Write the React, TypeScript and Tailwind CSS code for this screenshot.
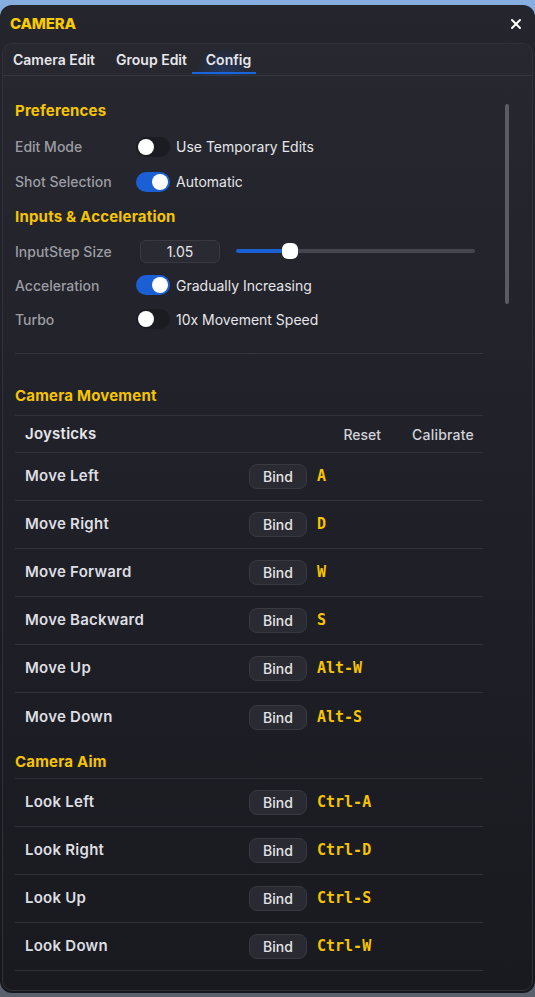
import { X } from "lucide-react";

const movement = [
  { name: "Move Left", key: "A" },
  { name: "Move Right", key: "D" },
  { name: "Move Forward", key: "W" },
  { name: "Move Backward", key: "S" },
  { name: "Move Up", key: "Alt-W" },
  { name: "Move Down", key: "Alt-S" },
];

const aim = [
  { name: "Look Left", key: "Ctrl-A" },
  { name: "Look Right", key: "Ctrl-D" },
  { name: "Look Up", key: "Ctrl-S" },
  { name: "Look Down", key: "Ctrl-W" },
];

function Toggle({ on }: { on: boolean }) {
  return (
    <div
      className={`w-[34px] h-[20px] rounded-full flex items-center px-[2px] ${
        on ? "bg-[#1b5fd4] justify-end" : "bg-[#1b1c22] justify-start"
      }`}
    >
      <div className="w-[16px] h-[16px] rounded-full bg-white" />
    </div>
  );
}

function PrefRow({ label, children, h = "h-[35px]" }: { label: string; children: React.ReactNode; h?: string }) {
  return (
    <div className={`flex items-center ${h}`}>
      <div className="w-[121px] text-[14px] font-medium text-[#9c9da4]">{label}</div>
      {children}
    </div>
  );
}

function Heading({ children, className = "" }: { children: React.ReactNode; className?: string }) {
  return (
    <div className={`h-[24px] flex items-center text-[15px] font-bold tracking-[0.2px] text-[#f6c500] ${className}`}>
      {children}
    </div>
  );
}

function BindRow({ name, bind, last }: { name: string; bind: string; last?: boolean }) {
  return (
    <div className={`flex items-center h-[48px] pl-[10px] ${last ? "" : "border-b border-[#32333a]"}`}>
      <div className="w-[224px] text-[15px] font-semibold tracking-[0.25px] text-[#dedee2]">{name}</div>
      <div className="w-[58px] h-[25px] rounded-lg bg-[#2a2b32] border border-[#383941] flex items-center justify-center text-[14px] font-medium text-[#e4e4e8]">
        Bind
      </div>
      <div className="ml-[10px] text-[15px] font-bold text-[#f6c500] font-['DejaVu_Sans_Mono',monospace]">{bind}</div>
    </div>
  );
}

export default function App() {
  return (
    <div className="w-[535px] h-[997px] bg-gradient-to-b from-[#86aee0] to-[#5a606c] pt-[5px] font-['Inter',sans-serif] overflow-hidden">
      <div className="h-[988px] rounded-[12px] bg-gradient-to-b from-[#24252d] to-[#16171d] flex flex-col">
        {/* Title bar */}
        <div className="h-[38px] flex items-center justify-between pl-[10px] pr-[11px] shrink-0">
          <span className="text-[15px] font-extrabold text-[#f8cb00] tracking-[-0.2px]">CAMERA</span>
          <X className="w-[16px] h-[16px] text-white" strokeWidth={3} />
        </div>

        {/* Inner panel */}
        <div className="flex-1 mx-[2px] mb-[2px] rounded-[10px] border border-[#30313a] bg-white/[0.015] flex flex-col overflow-hidden">
          {/* Tabs */}
          <div className="h-[32px] flex items-end border-b border-[#35363e] shrink-0 -ml-px">
            <div className="pl-[11px] pr-[10px] h-full flex items-center text-[14px] font-semibold text-[#e6e6ea]">Camera Edit</div>
            <div className="pl-[11px] pr-[5px] h-full flex items-center text-[14px] font-semibold text-[#e6e6ea]">Group Edit</div>
            <div className="relative w-[64px] h-full flex items-center justify-center pl-[9px] text-[14px] font-semibold text-[#e6e6ea] bg-[radial-gradient(ellipse_at_bottom,rgba(30,100,220,0.28),transparent_65%)]">
              Config
              <div className="absolute left-0 right-0 bottom-[1px] h-[2px] bg-[#1766dc]" />
            </div>
          </div>

          {/* Content */}
          <div className="flex flex-1">
            <div className="w-[480px] pl-[12px] pt-[23px]">
              <Heading className="mb-[6px]">Preferences</Heading>
              <PrefRow label="Edit Mode">
                <Toggle on={false} />
                <span className="ml-[6px] text-[14px] text-[#e6e6ea]">Use Temporary Edits</span>
              </PrefRow>
              <PrefRow label="Shot Selection">
                <Toggle on={true} />
                <span className="ml-[6px] text-[14px] text-[#e6e6ea]">Automatic</span>
              </PrefRow>

              <Heading className="mt-[6px] mb-[5px]">Inputs &amp; Acceleration</Heading>
              <PrefRow label="InputStep Size" h="h-[34px]">
                <div className="ml-[4px] w-[80px] h-[23px] rounded-md bg-[#2a2b32] border border-[#383941] flex items-center justify-center text-[14px] text-[#e6e6ea]">
                  1.05
                </div>
                <div className="ml-[16px] w-[239px] h-[17px] flex items-center">
                  <div className="w-[46px] h-[4px] bg-[#1b5fd4] rounded-l-full" />
                  <div className="w-[16px] h-[16px] rounded-[6px] bg-white shrink-0" />
                  <div className="flex-1 h-[4px] bg-[#46474e] rounded-r-full" />
                </div>
              </PrefRow>
              <PrefRow label="Acceleration" h="h-[34px]">
                <Toggle on={true} />
                <span className="ml-[6px] text-[14px] text-[#e6e6ea]">Gradually Increasing</span>
              </PrefRow>
              <PrefRow label="Turbo" h="h-[34px]">
                <Toggle on={false} />
                <span className="ml-[6px] text-[14px] text-[#e6e6ea]">10x Movement Speed</span>
              </PrefRow>

              <div className="mt-[17px] h-px bg-[#34353c]" />

              <Heading className="mt-[30px] mb-[7px]">Camera Movement</Heading>
              <div className="border-t border-[#32333a]">
                <div className="flex items-center h-[37px] pl-[10px] pr-[9px] border-b border-[#32333a]">
                  <div className="flex-1 text-[15px] font-semibold tracking-[0.25px] text-[#e6e6ea]">Joysticks</div>
                  <div className="text-[14px] font-medium text-[#d2d2d8]">Reset</div>
                  <div className="ml-[31px] text-[14px] font-medium tracking-[0.2px] text-[#d2d2d8]">Calibrate</div>
                </div>
                {movement.map((m, i) => (
                  <BindRow key={m.name} name={m.name} bind={m.key} last={i === movement.length - 1} />
                ))}
              </div>

              <Heading className="mt-[9px] mb-[4px]">Camera Aim</Heading>
              <div className="border-t border-[#2e2f36]">
                {aim.map((m) => (
                  <BindRow key={m.name} name={m.name} bind={m.key} />
                ))}
              </div>
            </div>

            <div className="ml-[22px] mt-[28px] w-[4px] h-[200px] rounded-full bg-[#5b5c63]" />
          </div>
        </div>
      </div>
    </div>
  );
}
